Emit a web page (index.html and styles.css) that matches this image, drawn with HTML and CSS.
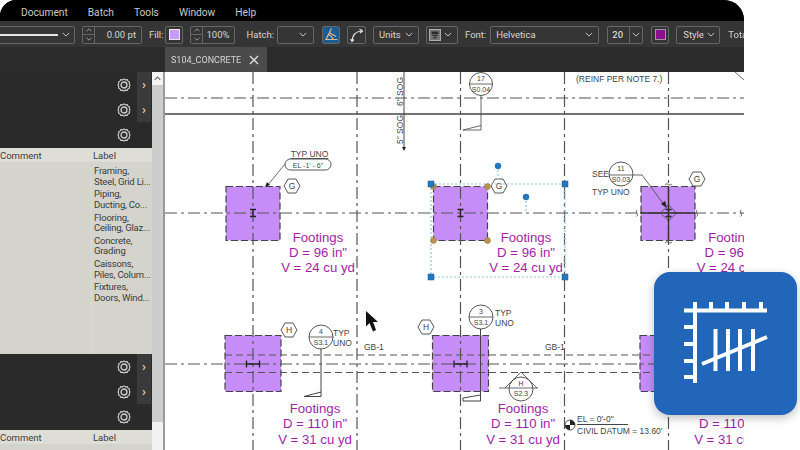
FILE: index.html
```html
<!DOCTYPE html>
<html lang="en">
<head>
<meta charset="utf-8">
<title>Bluebeam Revu</title>
<link rel="stylesheet" href="styles.css">
</head>
<body>
<svg class="defs" width="0" height="0" aria-hidden="true">
  <defs>
    <symbol id="gear" viewBox="0 0 14 14">
      <path class="gear-outer" d="M7 .9 8.500 1.900 10.300 1.600 11 3.200 12.500 4 12.200 5.700 13.100 7 12.200 8.300 12.500 10 11 10.800 10.300 12.400 8.500 12.100 7 13.100 5.500 12.100 3.700 12.400 3 10.800 1.500 10 1.800 8.300.9 7 1.800 5.700 1.500 4 3 3.200 3.700 1.600 5.500 1.900Z"/>
      <circle class="gear-inner" cx="7" cy="7" r="3"/>
    </symbol>
    <symbol id="chev" viewBox="0 0 10 6">
      <path class="chev-path" d="M1 1 5 5 9 1"/>
    </symbol>
    <symbol id="hex" viewBox="-8.500 -7.500 17 15" overflow="visible">
      <path class="hex-path" d="M-8-0L-4-7H4L8 0 4 7H-4Z"/>
    </symbol>
    <symbol id="ibeam" viewBox="-4 -4 8 8" overflow="visible">
      <path class="beam" d="M-3-3.500H3M0-3.500V3.500M-3 3.500H3"/>
    </symbol>
    <symbol id="hbeam" viewBox="-7 -4 14 8" overflow="visible">
      <path class="beam" d="M-6.500-3.500V3.500M6.500-3.500V3.500M-6.500 0H6.500"/>
    </symbol>
  </defs>
</svg>
<div class="window">
  <nav class="menu">
    <span>Document</span><span>Batch</span><span>Tools</span><span>Window</span><span>Help</span>
  </nav>
  <div class="toolbar">
    <div class="box line-select"><span class="line-sample"></span><svg class="chev"><use href="#chev"/></svg></div>
    <div class="box spinner spin-wide"><span class="arrows"><i><svg class="chev chev-up"><use href="#chev"/></svg></i><i><svg class="chev"><use href="#chev"/></svg></i></span><span class="spin-val">0.00 pt</span></div>
    <div class="field"><span>Fill:</span><span class="box swatch"><b class="fill-light"></b></span></div>
    <div class="box spinner spin-narrow"><span class="arrows"><i><svg class="chev chev-up"><use href="#chev"/></svg></i><i><svg class="chev"><use href="#chev"/></svg></i></span><span class="spin-val">100%</span></div>
    <div class="field field-hatch"><span>Hatch:</span><span class="box hatch"><svg class="chev"><use href="#chev"/></svg></span></div>
    <div class="box icon-btn active">
      <svg width="16" height="16" viewBox="0 0 16 16"><path class="ic-line" d="M8.500 1.500 3 12.500H14.500M5.500 7.500C8 8.500 9.500 10 10 12.500M7 6 13 9.500"/></svg>
    </div>
    <div class="box icon-btn">
      <svg width="16" height="16" viewBox="0 0 16 16"><path class="ic-line" d="M3 14C3.500 8.500 7 4.500 12.500 4M10.500 2 13.500 4 11 6M1.500 12 3 14.500 5 12.500"/></svg>
    </div>
    <div class="box text-select units">Units<svg class="chev"><use href="#chev"/></svg></div>
    <div class="box text-select align">
      <svg width="14" height="14" viewBox="0 0 14 14"><rect class="ic-frame" x=".5" y=".5" width="13" height="13"/><path class="ic-fill" d="M3 3H11V6H3ZM4 7H10V8.500H4ZM5 9.500H9V11H5Z"/></svg>
      <svg class="chev"><use href="#chev"/></svg>
    </div>
    <div class="field"><span>Font:</span><span class="box text-select font-select">Helvetica<svg class="chev"><use href="#chev"/></svg></span></div>
    <div class="box size-select"><span class="size-val">20</span><span class="size-arrow"><svg class="chev"><use href="#chev"/></svg></span></div>
    <div class="box swatch swatch-dark"><b class="fill-dark"></b></div>
    <div class="box text-select style-select">Style<svg class="chev"><use href="#chev"/></svg></div>
    <span class="total">Total</span>
  </div>
  <div class="tabbar">
    <div class="tab"><span>S104_CONCRETE</span>
      <svg width="10" height="10" viewBox="0 0 10 10"><path class="tab-x" d="M1 1 9 9M9 1 1 9"/></svg>
    </div>
  </div>
  <main class="main">
    <aside class="side">
      <div class="gears">
        <div class="gear-row tabbed"><svg class="gear"><use href="#gear"/></svg><span class="gear-tab">&#8250;</span></div>
        <div class="gear-row tabbed"><svg class="gear"><use href="#gear"/></svg><span class="gear-tab">&#8250;</span></div>
        <div class="gear-row"><svg class="gear"><use href="#gear"/></svg></div>
      </div>
      <div class="table-head"><span>Comment</span><span>Label</span></div>
      <div class="table-body">
        <div class="labels">
          <p>Framing,<br>Steel, Grid Li...</p>
          <p>Piping,<br>Ducting, Co...</p>
          <p>Flooring,<br>Ceiling, Glaz...</p>
          <p>Concrete,<br>Grading</p>
          <p>Caissons,<br>Piles, Colum...</p>
          <p>Fixtures,<br>Doors, Wind...</p>
        </div>
      </div>
      <div class="gears">
        <div class="gear-row tabbed"><svg class="gear"><use href="#gear"/></svg><span class="gear-tab">&#8250;</span></div>
        <div class="gear-row tabbed"><svg class="gear"><use href="#gear"/></svg><span class="gear-tab">&#8250;</span></div>
        <div class="gear-row"><svg class="gear"><use href="#gear"/></svg></div>
      </div>
      <div class="table-head"><span>Comment</span><span>Label</span></div>
      <div class="table-tail"></div>
    </aside>
    <div class="scroll">
      <div class="scroll-btn"><svg class="scroll-chev" viewBox="0 0 10 6"><path d="M1 5 5 1 9 5"/></svg></div>
      <div class="scroll-track"></div>
      <div class="scroll-end"></div>
    </div>
    <div class="canvas">
      <svg class="drawing" width="579" height="378" viewBox="165 72 579 378">
        <!-- footings -->
        <g class="pad">
          <rect x="226" y="186.500" width="54" height="54"/>
          <rect x="433.500" y="186.500" width="54" height="54"/>
          <rect x="641" y="186.500" width="54" height="54"/>
          <rect x="225" y="335.500" width="56" height="56"/>
          <rect x="432.500" y="335.500" width="56" height="56"/>
          <rect x="640" y="335.500" width="56" height="56"/>
        </g>
        <!-- grid -->
        <g class="grid">
          <path d="M253 72V450M357 72V450M460.500 72V450M564.500 72V450M668.500 72V450"/>
          <path d="M165 98H744M165 213H744M165 364H744"/>
        </g>
        <path class="solid" d="M165 114H744"/>
        <path class="dashed" d="M225 355H744M225 372.500H744"/>
        <path class="thin" d="M735 72 744 80"/>
        <!-- section mark -->
        <path class="solid-thin" d="M404 72V147"/>
        <path class="ink" d="M402 147H406L404 151Z"/>
        <text class="small" transform="translate(403 106) rotate(-90)">6" SOG</text>
        <text class="small" transform="translate(403 144) rotate(-90)">5" SOG</text>
        <text class="small" x="576" y="82">(REINF PER NOTE 7.)</text>
        <!-- callout 17 -->
        <circle class="bubble" cx="481" cy="84" r="11.500"/>
        <path class="thin" d="M469.500 84H492.500M481 95.500V130H463L481 125.500"/>
        <text class="tiny mid" x="481" y="81">17</text>
        <text class="tiny mid" x="481" y="91.500">S0.04</text>
        <!-- typ uno note -->
        <text class="small mid under" x="309.500" y="157">TYP UNO</text>
        <rect class="bubble" x="285" y="159" width="46" height="11" rx="5.500"/>
        <text class="tiny mid" x="308" y="167.500">EL -1' - 6"</text>
        <path class="thin" d="M285 164 267 186"/>
        <path class="ink" d="M265 187 267 182 270 185Z"/>
        <!-- hex tags -->
        <use href="#hex" x="283.500" y="178.500" width="17" height="15"/>
        <text class="small mid" x="292" y="189">G</text>
        <use href="#hex" x="490.500" y="178.500" width="17" height="15"/>
        <text class="small mid" x="499" y="189">G</text>
        <use href="#hex" x="688.500" y="171.500" width="17" height="15"/>
        <text class="small mid" x="697" y="182">G</text>
        <use href="#hex" x="280.500" y="322.500" width="17" height="15"/>
        <text class="small mid" x="289" y="333">H</text>
        <use href="#hex" x="417.500" y="319.500" width="17" height="15"/>
        <text class="small mid" x="426" y="330">H</text>
        <!-- beams -->
        <use href="#ibeam" x="249" y="209" width="8" height="8"/>
        <use href="#ibeam" x="456.500" y="209" width="8" height="8"/>
        <use href="#ibeam" x="664.500" y="209" width="8" height="8"/>
        <use href="#hbeam" x="246" y="360" width="14" height="8"/>
        <use href="#hbeam" x="453.500" y="360" width="14" height="8"/>
        <!-- see 11 -->
        <text class="small" x="592" y="177">SEE</text>
        <text class="small" x="592" y="195">TYP UNO</text>
        <circle class="bubble" cx="621" cy="174" r="12"/>
        <path class="thin" d="M609 175H642L665 206"/>
        <path class="ink" d="M667 208 661 204 665 201Z"/>
        <text class="tiny mid" x="621" y="171">11</text>
        <text class="tiny mid" x="621" y="182">S0.03</text>
        <path class="thin" d="M668.500 205 676.500 213 668.500 221 660.500 213Z"/>
        <path class="thick" d="M640 213H695M668.500 186V240"/>
        <path class="thin" d="M665 184.500Q667 183 668.500 184.500T672 184M665 242.500Q667 241 668.500 242.500T672 242M637 210Q635.500 212 637 213.500T636.500 216.500M697 210Q695.500 212 697 213.500T696.500 216.500M741 210Q739.500 212 741 213.500T740.500 216.500"/>
        <!-- callouts row 2 -->
        <circle class="bubble" cx="321" cy="337" r="12"/>
        <path class="thin" d="M309 337H333"/>
        <path class="solid-thin" d="M321 349V396.500H304L321 392"/>
        <text class="tiny mid" x="321" y="334">4</text>
        <text class="tiny mid" x="321" y="345">S3.1</text>
        <text class="small" x="333" y="336">TYP</text>
        <text class="small" x="333" y="346">UNO</text>
        <text class="small" x="364" y="350">GB-1</text>
        <circle class="bubble" cx="481" cy="317" r="12"/>
        <path class="thin" d="M469 317H493"/>
        <path class="solid-thin" d="M480.500 329V401H463V398L480.500 395"/>
        <text class="tiny mid" x="481" y="314">3</text>
        <text class="tiny mid" x="481" y="325">S3.1</text>
        <text class="small" x="495" y="316">TYP</text>
        <text class="small" x="495" y="326">UNO</text>
        <text class="small" x="545" y="350">GB-1</text>
        <circle class="bubble" cx="521" cy="389" r="12"/>
        <path class="thin" d="M499 388H538M505 388 521 372 537 388"/>
        <text class="tiny mid" x="521" y="386">H</text>
        <text class="tiny mid" x="521" y="396">S2.3</text>
        <!-- datum -->
        <circle class="bubble" cx="570" cy="425" r="5"/>
        <path class="ink" d="M570 420A5 5 0 0 1 575 425H570ZM570 430A5 5 0 0 1 565 425H570Z"/>
        <path class="solid-thin" d="M577 424.500H628"/>
        <text class="small" x="577" y="421.500">EL = 0'-0"</text>
        <text class="small" x="577" y="434">CIVIL DATUM = 13.60'</text>
        <!-- markup text -->
        <text class="label mid" x="318" y="242">Footings</text>
        <text class="label mid" x="318" y="257">D = 96 in"</text>
        <text class="label mid" x="318" y="272">V = 24 cu yd</text>
        <text class="label mid" x="526" y="242">Footings</text>
        <text class="label mid" x="526" y="257">D = 96 in"</text>
        <text class="label mid" x="526" y="272">V = 24 cu yd</text>
        <text class="label mid" x="733.500" y="242">Footings</text>
        <text class="label mid" x="733.500" y="257">D = 96 in"</text>
        <text class="label mid" x="733.500" y="272">V = 24 cu yd</text>
        <text class="label mid" x="315" y="412.500">Footings</text>
        <text class="label mid" x="315" y="428">D = 110 in"</text>
        <text class="label mid" x="315" y="443.500">V = 31 cu yd</text>
        <text class="label mid" x="523" y="412.500">Footings</text>
        <text class="label mid" x="523" y="428">D = 110 in"</text>
        <text class="label mid" x="523" y="443.500">V = 31 cu yd</text>
        <text class="label mid" x="731" y="428">D = 110 in"</text>
        <text class="label mid" x="731" y="443.500">V = 31 cu yd</text>
        <!-- selection -->
        <rect class="select" x="431" y="184" width="134" height="93"/>
        <path class="select" d="M498 166V180M526 197V213"/>
        <g class="handle-tan">
          <circle cx="433.500" cy="186.500" r="3"/><circle cx="487.500" cy="186.500" r="3"/>
          <circle cx="433.500" cy="240.500" r="3"/><circle cx="487.500" cy="240.500" r="3"/>
        </g>
        <g class="handle-blue">
          <rect x="428" y="181" width="6" height="6"/><rect x="562" y="181" width="6" height="6"/>
          <rect x="428" y="274" width="6" height="6"/><rect x="562" y="274" width="6" height="6"/>
          <circle cx="498" cy="166" r="3"/><circle cx="526" cy="197" r="3"/>
        </g>
        <!-- cursor -->
        <path class="cursor" d="M366 311V326.500L369.500 323 373 331.500 376 330 373 322H378Z"/>
      </svg>
    </div>
  </main>
</div>
<div class="badge">
  <svg width="143" height="143" viewBox="654 272 143 143">
    <path class="badge-mark" d="M684 310.500H767M695 302V383M711 302V310M727 302V310M744 302V310M761 302V310M684 327H695M684 344H695M684 361H695M684 377H695M715.500 329V371M728 329V371M740 329V371M753 329V371M702 364 767 337"/>
  </svg>
</div>
</body>
</html>
```

FILE: styles.css
```css
* { box-sizing: border-box; }
html, body { margin: 0; height: 100%; }
body {
  position: relative;
  width: 800px;
  height: 450px;
  overflow: hidden;
  background: #fff;
  font-family: Roboto, "Liberation Sans", sans-serif;
}
.defs { position: absolute; }
.window {
  width: 744px;
  height: 450px;
  display: flex;
  flex-direction: column;
  overflow: hidden;
  border-radius: 16px 20px 0 0;
  background: #2b2b2b;
  filter: blur(.35px);
}
.menu {
  height: 21px;
  flex: none;
  display: flex;
  align-items: center;
  gap: 20px;
  padding: 3px 0 0 21px;
  background: #000;
  color: #c9c9c9;
  font-size: 10.200px;
}
.toolbar {
  height: 26px;
  flex: none;
  display: flex;
  align-items: center;
  gap: 7px;
  margin-left: -2px;
  padding-top: 1px;
  background: #353535;
  color: #d6d6d6;
  font-size: 9.500px;
  white-space: nowrap;
}
.box {
  height: 18px;
  flex: none;
  display: flex;
  align-items: center;
  border: 1px solid #666;
  border-radius: 2px;
}
.chev { width: 8px; height: 5px; flex: none; }
.chev-up { transform: scaleY(-1); }
.chev-path { fill: none; stroke: #ccc; stroke-width: 1.200; }
.line-select { width: 77px; padding: 0 4px 0 0; justify-content: space-between; }
.line-sample { width: 59px; height: 2px; background: #e4e4e4; }
.spinner { overflow: hidden; }
.spin-wide { width: 60px; }
.spin-narrow { width: 45px; }
.arrows {
  width: 12px;
  height: 100%;
  flex: none;
  display: flex;
  flex-direction: column;
  border-right: 1px solid #666;
}
.arrows i {
  flex: 1;
  display: flex;
  justify-content: center;
  align-items: center;
}
.arrows i + i { border-top: 1px solid #666; }
.arrows .chev { width: 6px; height: 4px; }
.spin-val { flex: 1; text-align: right; padding-right: 5px; }
.field { display: flex; align-items: center; gap: 2px; flex: none; }
.field-hatch { gap: 3px; margin-left: 4px; }
.swatch { width: 18px; justify-content: center; }
.swatch-dark { margin-left: 1px; }
.swatch b { width: 11px; height: 11px; border: 1px solid #e8e8e8; }
.fill-light { background: #c79bf6; }
.swatch .fill-dark { background: #8c0f90; border-color: #999; }
.hatch { width: 37px; justify-content: flex-end; padding-right: 6px; }
.icon-btn { width: 19px; justify-content: center; }
.active { width: 18px; margin-left: 1px; background: #1d5c92; }
.ic-line { fill: none; stroke: #e0e0e0; stroke-width: 1.200; }
.active .ic-line { stroke: #d9b98a; }
.ic-frame { fill: #777; stroke: #bbb; }
.ic-fill { fill: #2c2c2c; }
.text-select { justify-content: space-between; padding: 0 5px 0 5px; gap: 3px; }
.units { width: 46px; }
.align { width: 32px; padding-left: 2px; }
.field .font-select { margin-left: 2px; }
.font-select { width: 109px; }
.style-select { width: 44px; padding-left: 6px; }
.size-select { width: 36px; margin-left: 1px; }
.size-val { width: 21px; padding-left: 4px; font-weight: 500; }
.size-arrow {
  flex: 1;
  height: 100%;
  display: flex;
  align-items: center;
  justify-content: center;
  border-left: 1px solid #666;
}
.total { margin-left: 1px; }
.tabbar { height: 25px; flex: none; padding-left: 165px; background: #2b2b2b; }
.tab {
  width: 102px;
  height: 100%;
  display: flex;
  align-items: center;
  justify-content: space-between;
  padding: 0 8px 0 6px;
  background: #4b4b4b;
  color: #d6d6d6;
  font-size: 9px;
}
.tab-x { fill: none; stroke: #e4e4e4; stroke-width: 1.300; }
.main { flex: 1; display: flex; min-height: 0; }
.side {
  width: 152px;
  flex: none;
  display: flex;
  flex-direction: column;
  background: #d4d4cc;
  font-size: 9.500px;
  color: #3c3c3c;
}
.gears {
  height: 76px;
  flex: none;
  display: flex;
  flex-direction: column;
  background: #2a2a2a;
}
.gear-row {
  height: 25px;
  flex: none;
  position: relative;
  display: flex;
  align-items: center;
  padding-left: 117px;
}
.gear { width: 14px; height: 14px; }
.gear-outer { fill: none; stroke: #cfcfcf; stroke-width: 1.100; }
.gear-inner { fill: #333; stroke: #cfcfcf; stroke-width: 1.300; }
.gear-tab {
  position: absolute;
  left: 137px;
  right: 1px;
  top: 0;
  bottom: 0;
  display: flex;
  align-items: center;
  justify-content: center;
  background: #3a3a3a;
  color: #cfcfcf;
  font-size: 13px;
  font-weight: 700;
}
.table-head {
  height: 14px;
  flex: none;
  display: grid;
  grid-template-columns: 93px 1fr;
  align-items: center;
  background: #deded6;
}
.table-body { height: 192px; flex: none; padding: 4px 0 0 91px; }
.labels { height: 100%; padding-left: 2px; border-left: 1px solid #dadad2; letter-spacing: -.2px; }
.labels p { height: 23.300px; margin: 0; line-height: 10.500px; white-space: nowrap; }
.table-tail { flex: 1; }
.scroll {
  width: 13px;
  flex: none;
  display: flex;
  flex-direction: column;
  background: #cdcdcd;
  border-right: 2px solid #9a9a9a;
}
.scroll-btn {
  height: 13px;
  flex: none;
  display: flex;
  justify-content: center;
  align-items: center;
  background: #f4f4f4;
}
.scroll-chev { width: 7px; height: 5px; }
.scroll-chev path { fill: none; stroke: #666; stroke-width: 1.500; }
.scroll-track { flex: 1; }
.scroll-end { height: 28px; flex: none; background: #f2f2f2; }
.canvas { flex: 1; min-width: 0; background: #fff; }
.drawing { display: block; }
.pad rect { fill: #c68cf8; stroke: #444; stroke-width: 1.200; stroke-dasharray: 7 3; }
.grid path { fill: none; stroke: #555; stroke-width: 1.200; stroke-dasharray: 12 4 3 4; }
.solid { fill: none; stroke: #444; stroke-width: 1.400; }
.solid-thin { fill: none; stroke: #444; stroke-width: 1; }
.dashed { fill: none; stroke: #555; stroke-width: 1.200; stroke-dasharray: 7 4; }
.thin { fill: none; stroke: #444; stroke-width: .800; }
.thick { fill: none; stroke: #333; stroke-width: 1.400; }
.ink { fill: #222; }
.bubble { fill: #fff; stroke: #444; stroke-width: .900; }
.hex-path { fill: #fff; stroke: #444; stroke-width: .900; }
.beam { fill: none; stroke: #222; stroke-width: 1.300; }
.small { font-family: "Liberation Sans", sans-serif; font-size: 8.500px; fill: #444; }
.tiny { font-family: "Liberation Sans", sans-serif; font-size: 7px; fill: #444; }
.mid { text-anchor: middle; }
.under { text-decoration: underline; }
.label { font-family: "Liberation Sans", sans-serif; font-size: 13.200px; fill: #a01fa6; }
.select { fill: none; stroke: #8fc8ea; stroke-width: 1.200; stroke-dasharray: 2 2; }
.handle-tan circle { fill: #bb9350; stroke: #8d713f; stroke-width: .500; }
.handle-blue > * { fill: #2277bd; stroke: #1a5f99; stroke-width: .500; }
.cursor { fill: #111; }
.badge {
  position: absolute;
  left: 654px;
  top: 272px;
  width: 143px;
  height: 143px;
  border-radius: 16px;
  background: #2166b8;
  box-shadow: 0 3px 10px rgba(0, 0, 0, .25);
}
.badge svg { display: block; }
.badge-mark { fill: none; stroke: #fff; stroke-width: 4; }
```
